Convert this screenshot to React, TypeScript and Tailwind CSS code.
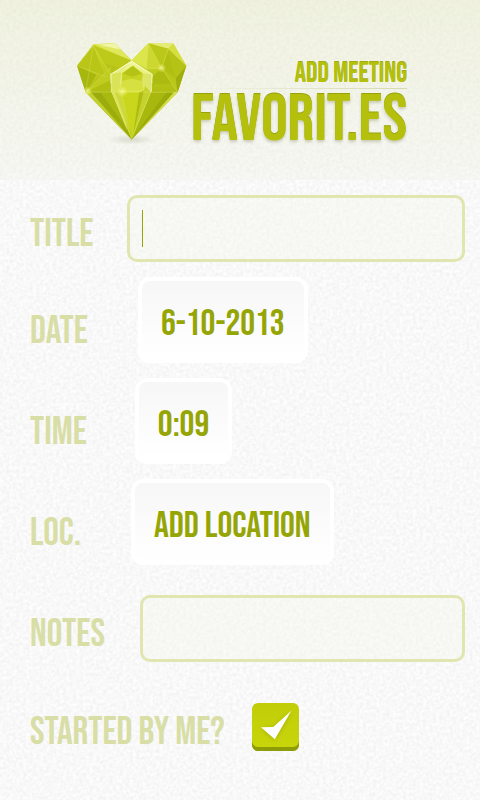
import { useState } from "react";

const noiseId = "paper-noise";

function PaperTexture() {
  return (
    <svg aria-hidden="true" className="pointer-events-none absolute inset-0 -z-10 h-full w-full">
      <filter id={noiseId} x="0" y="0" width="100%" height="100%">
        <feTurbulence type="fractalNoise" baseFrequency="0.3" numOctaves="3" seed="4" />
        <feColorMatrix values="0 0 0 0 0  0 0 0 0 0  0 0 0 0 0  0.08 0 0 0 -0.022" />
      </filter>
      <rect width="100%" height="100%" filter={`url(#${noiseId})`} />
    </svg>
  );
}

function HeartLogo() {
  return (
    <svg viewBox="54 36 330 320" className="h-[107px] w-[110px] shrink-0" aria-hidden="true">
      <defs>
        <linearGradient id="lobe" x1="0" y1="0" x2="0" y2="1">
          <stop offset="0" stopColor="#d3dd2c" />
          <stop offset="1" stopColor="#b0be12" />
        </linearGradient>
        <linearGradient id="lower" x1="0" y1="0" x2="0" y2="1">
          <stop offset="0" stopColor="#bccb18" />
          <stop offset="1" stopColor="#93a30a" />
        </linearGradient>
        <linearGradient id="core" x1="0" y1="0" x2="0" y2="1">
          <stop offset="0" stopColor="#f2f6a0" />
          <stop offset="0.4" stopColor="#dfe74a" />
          <stop offset="1" stopColor="#bccc10" />
        </linearGradient>
        <radialGradient id="spark">
          <stop offset="0" stopColor="#fbfdb0" stopOpacity="0.8" />
          <stop offset="1" stopColor="#f0f560" stopOpacity="0" />
        </radialGradient>
        <radialGradient id="ground">
          <stop offset="0" stopColor="#777c50" stopOpacity="0.22" />
          <stop offset="1" stopColor="#777c50" stopOpacity="0" />
        </radialGradient>
      </defs>

      <ellipse cx="218" cy="328" rx="70" ry="16" fill="url(#ground)" />

      {/* left lobe */}
      <polygon points="54,107 103,42 167,39 218,91 155,132 155,186 80,186" fill="url(#lobe)" />
      <polygon points="103,42 167,39 218,91" fill="#dfe75c" />
      <polygon points="118,44 167,39 184,58" fill="#f1f5a8" />
      <polygon points="103,46 54,107 82,96" fill="#ccd730" />
      <polygon points="103,46 155,132 214,92" fill="#b7c416" />
      <polygon points="103,46 140,100 180,112 214,92" fill="#bdca1a" />
      <polygon points="103,46 54,107 138,140" fill="#b9c618" />
      <polygon points="54,107 80,186 112,134" fill="#a8b70e" />
      <polygon points="80,186 155,112 155,150" fill="#c0cd20" />
      <polygon points="80,186 155,150 155,186" fill="#b0bf12" />

      {/* right lobe */}
      <polygon points="218,91 268,39 343,40 382,107 356,186 278,186 280,132" fill="url(#lobe)" />
      <polygon points="218,91 268,39 262,116" fill="#dce54a" />
      <polygon points="268,39 343,40 328,56" fill="#e6ec78" />
      <polygon points="343,40 382,107 328,56" fill="#d5df40" />
      <polygon points="268,39 308,114 262,116" fill="#ccd730" />
      <polygon points="268,39 328,56 308,114" fill="#bac81a" />
      <polygon points="328,56 308,114 350,145" fill="#b0bf12" />
      <polygon points="328,56 382,107 350,145" fill="#b5c316" />
      <polygon points="308,114 350,145 356,186" fill="#b9c718" />
      <polygon points="308,114 280,140 278,162 340,162" fill="#acbb10" />
      <polygon points="382,107 356,186 350,145" fill="#9fae0c" />

      {/* lower body */}
      <polygon points="80,186 356,186 218,328" fill="url(#lower)" />
      <polygon points="80,186 96,186 218,328" fill="#c3cf30" />
      <polygon points="96,186 160,186 200,300" fill="#9bac0c" />
      <polygon points="124,186 160,186 196,284" fill="#aab910" />
      <polygon points="276,186 322,186 218,328" fill="#a8b80e" />
      <polygon points="322,186 344,186 218,328" fill="#9bac0a" />
      <polygon points="346,186 356,186 218,328" fill="#d3dd50" />

      {/* front facet */}
      <polygon points="218,92 280,132 276,186 218,328 158,186 155,132" fill="url(#core)" />
      <polygon points="218,92 155,132 158,186 190,156 188,126" fill="#e6ed80" />
      <polygon points="155,132 158,186 204,300 182,160 188,126" fill="#dae358" />
      <polygon points="168,186 188,186 214,312" fill="#cdd93a" />
      <polygon points="188,186 240,186 222,320" fill="#c9d61c" />
      <polygon points="240,186 262,180 222,318" fill="#aebd10" />
      <polygon points="262,150 276,186 222,318" fill="#c5d22e" />
      <polygon points="252,130 280,132 276,186 248,158" fill="#dce566" />
      <polygon points="222,106 252,130 248,156 188,156 190,128" fill="#c6d322" />
      <polygon points="220,108 248,130 220,140 192,130" fill="#b4c314" />
      <polygon points="190,152 218,146 248,152 254,182 182,182" fill="#d6e040" />
      <polygon
        points="218,93 279,132 275,186 218,324 159,186 156,132"
        fill="none"
        stroke="#f3f7b0"
        strokeWidth="2"
        strokeOpacity="0.35"
      />
      <path d="M156 160V132L218 94 279 132V160" fill="none" stroke="#f8fbd0" strokeWidth="3" strokeOpacity="0.7" />

      {/* edge highlights */}
      <g fill="none" stroke="#edf38e" strokeWidth="2">
        <path d="M54 107 103 46 155 132M54 107 140 140M80 186 103 46M80 186 155 112" strokeOpacity="0.35" />
        <path d="M268 39 308 114 328 56 382 107M308 114 356 186M262 116 308 114M262 116 268 39" strokeOpacity="0.45" />
        <path d="M80 186H356" strokeOpacity="0.4" />
      </g>
      <circle cx="308" cy="114" r="14" fill="url(#spark)" />
      <circle cx="86" cy="182" r="14" fill="url(#spark)" />
      <circle cx="190" cy="184" r="18" fill="url(#spark)" />
    </svg>
  );
}

const rowClass = "flex items-center pl-[30px] pr-[15px]";
const labelClass = "shrink-0 whitespace-nowrap text-[39px] leading-10 text-[#d8dea6]";
const inputClass =
  "h-[67px] w-full min-w-0 rounded-[10px] border-[3px] border-[#e1e6b1] bg-[#f5f5ee]/40 px-3 text-[39px] text-[#95a505] caret-transparent outline-none";
const buttonClass =
  "h-[86px] rounded-xl border-4 border-white bg-linear-to-b from-[#f7f7f7] to-white px-[19px] pt-2 text-[37px] leading-10 text-[#95a505]";

function App() {
  const [title, setTitle] = useState("");
  const [notes, setNotes] = useState("");
  const [startedByMe, setStartedByMe] = useState(true);

  return (
    <div className="relative isolate min-h-screen bg-[#fdfdfd] font-['Bebas_Neue','Roboto_Condensed','Liberation_Sans',sans-serif] uppercase">
      <PaperTexture />

      {/* ── Header ── */}
      <header className="flex h-[180px] justify-center bg-linear-to-b from-[#e3e7bd]/45 to-[#eeefe2]/30 pt-[42px] pl-1">
        <HeartLogo />
        <div className="ml-1 pt-[18px] text-right text-[#b4c00b]">
          <p className="text-[28px] leading-[28px] [text-shadow:0_-1px_0_#a0ab0d]">Add Meeting</p>
          <div className="h-px bg-linear-to-r from-transparent to-[#d5dab0]" />
          <h1 className="text-[66px] leading-[64px] [text-shadow:0_-1px_0_#98a30c,0_2px_3px_rgba(70,75,20,0.25)]">
            Favorit.es
          </h1>
        </div>
      </header>

      {/* ── Form ── */}
      <form className="flex flex-col gap-[15px] py-[15px]" onSubmit={(e) => e.preventDefault()}>
        <div className={`${rowClass} gap-8`}>
          <label htmlFor="title" className={`${labelClass} min-w-[65px] pt-3`}>
            Title
          </label>
          <div className="relative flex-1">
            <input
              id="title"
              value={title}
              onChange={(e) => setTitle(e.target.value)}
              className={inputClass}
            />
            {title === "" && (
              <span className="pointer-events-none absolute inset-y-[15px] left-[15px] w-px bg-[#95a505]" />
            )}
          </div>
        </div>

        <div className={`${rowClass} gap-12`}>
          <label htmlFor="date" className={`${labelClass} min-w-[60px] pt-6`}>
            Date
          </label>
          <button id="date" type="button" className={buttonClass}>
            6-10-2013
          </button>
        </div>

        <div className={`${rowClass} gap-12`}>
          <label htmlFor="time" className={`${labelClass} min-w-[56px] pt-6`}>
            Time
          </label>
          <button id="time" type="button" className={buttonClass}>
            0:09
          </button>
        </div>

        <div className={`${rowClass} gap-12`}>
          <label htmlFor="location" className={`${labelClass} min-w-[53px] pt-6`}>
            Loc.
          </label>
          <button id="location" type="button" className={buttonClass}>
            Add location
          </button>
        </div>

        <div className={`${rowClass} gap-8 pt-[15px]`}>
          <label htmlFor="notes" className={`${labelClass} min-w-[78px] pt-3`}>
            Notes
          </label>
          <input
            id="notes"
            value={notes}
            onChange={(e) => setNotes(e.target.value)}
            className={inputClass}
          />
        </div>

        <div className={`${rowClass} gap-6 pt-6`}>
          <label htmlFor="started" className={`${labelClass} min-w-[198px] pt-3`}>
            Started by me?
          </label>
          <div className="relative h-12 w-[47px]">
            <input
              id="started"
              type="checkbox"
              checked={startedByMe}
              onChange={(e) => setStartedByMe(e.target.checked)}
              className="peer block h-12 w-[47px] appearance-none rounded-md bg-linear-to-b from-[#c1cd08] to-[#c9d60a] shadow-[inset_0_-4px_0_#8e9c0a]"
            />
            <svg
              viewBox="0 0 47 48"
              className="pointer-events-none absolute inset-0 hidden drop-shadow-sm peer-checked:block"
              aria-hidden="true"
            >
              <path d="M9 24.3 21.3 24 39.3 7.7 22.8 36.3Z" fill="#fff" />
            </svg>
          </div>
        </div>
      </form>
    </div>
  );
}

export default App;
